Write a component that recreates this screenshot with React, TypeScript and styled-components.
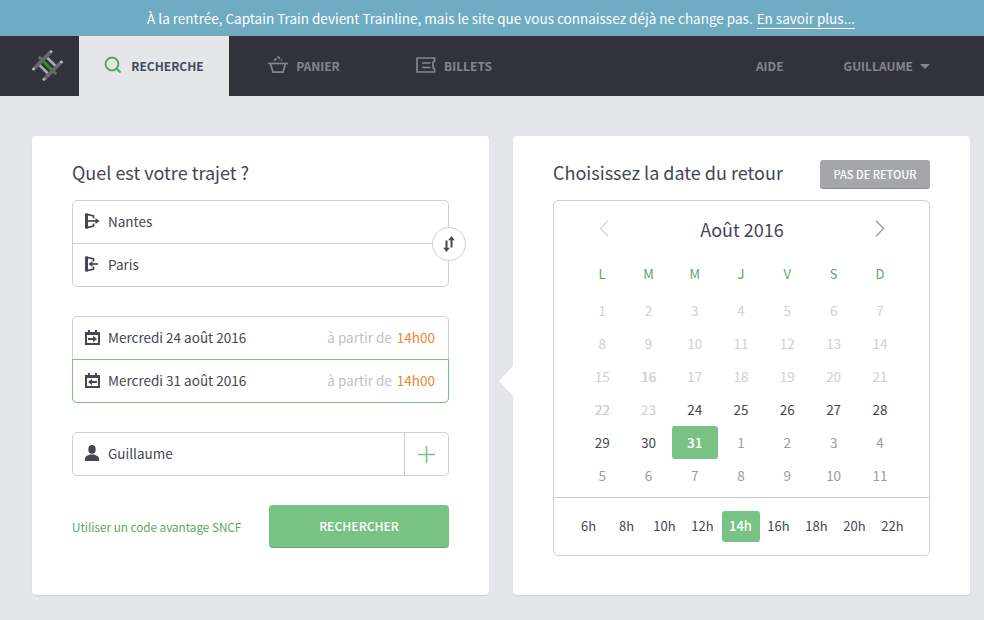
import React from 'react'
import styled, { createGlobalStyle } from 'styled-components'

const FONT = '"Noto Sans CJK SC", "Source Sans Pro", "Open Sans", sans-serif'
const GREEN = '#78c283'
const INK = '#454654'

const Global = createGlobalStyle`
  html, body { margin: 0; padding: 0; }
  body {
    width: 984px;
    height: 620px;
    overflow: hidden;
    background: #e4e6ea;
    font-family: ${FONT};
    color: ${INK};
  }
  * { box-sizing: border-box; }
`

const Banner = styled.div`
  height: 36px;
  background: #6facc3;
  color: #fff;
  font-size: 13.5px;
  line-height: 36px;
  text-align: center;
  padding-left: 18px;
`

const BannerLink = styled.a`
  margin-left: 4px;
  border-bottom: 1px solid #fff;
`

const Nav = styled.nav`
  height: 60px;
  display: flex;
  background: #32323c;
`

const LogoCell = styled.div`
  width: 79px;
  display: flex;
  align-items: center;
  padding: 0 0 1px 32px;
`

const NavItem = styled.div<{ $active?: boolean }>`
  width: 150px;
  display: flex;
  align-items: center;
  justify-content: center;
  gap: ${p => (p.$active ? 9 : 8)}px;
  padding-bottom: 2px;
  font-size: 12px;
  font-weight: 700;
  background: ${p => (p.$active ? '#e4e6ea' : 'transparent')};
  color: ${p => (p.$active ? '#434a60' : '#85858c')};
`

const NavRight = styled.div`
  margin-left: auto;
  display: flex;
  align-items: center;
  padding: 0 54px 2px 0;
  gap: 60px;
  font-size: 12px;
  font-weight: 700;
  color: #85858c;
`

const UserMenu = styled.div`
  display: flex;
  align-items: center;
  gap: 7px;
`

const Caret = styled.span`
  width: 0;
  height: 0;
  margin-top: 3px;
  border-left: 5px solid transparent;
  border-right: 5px solid transparent;
  border-top: 5px solid #85858c;
`

const Main = styled.main`
  display: flex;
  gap: 24px;
  padding: 40px 14px 0 32px;
`

const Card = styled.section`
  position: relative;
  width: 457px;
  height: 459px;
  background: #fff;
  border-radius: 4px;
  box-shadow: 0 1px 1px rgba(50, 50, 60, 0.12);
  padding: 24px 40px 0;
`

const Tail = styled.span`
  position: absolute;
  left: -14px;
  top: 230px;
  width: 0;
  height: 0;
  border-top: 15px solid transparent;
  border-bottom: 15px solid transparent;
  border-right: 14px solid #fff;
`

const Title = styled.h2`
  margin: 0;
  height: 26px;
  font-size: 18px;
  font-weight: 400;
  line-height: 24px;
  color: ${INK};
`

const FieldGroup = styled.div<{ $mt: number }>`
  position: relative;
  margin-top: ${p => p.$mt}px;
  border: 1px solid #cfd0d3;
  border-radius: 5px;
`

const Row = styled.div<{ $selected?: boolean }>`
  height: 42px;
  display: flex;
  align-items: center;
  padding: 0 13px 2px 12px;
  font-size: 13.5px;
  color: ${INK};
  & + & {
    height: 43px;
    border-top: 1px solid #cfd0d3;
  }
  ${p =>
    p.$selected &&
    `
    && {
      height: 44px;
      margin: 0 -1px -1px;
      border: 1px solid ${GREEN};
      border-radius: 0 0 5px 5px;
      padding: 0 13px 2px 12px;
    }
  `}
`

const RowIcon = styled.span`
  width: 23px;
  height: 16px;
  display: flex;
  align-items: center;
  flex: none;
`

const RowHint = styled.span`
  margin-left: auto;
  color: #bfc0c4;
`

const RowTime = styled.span`
  margin-left: 5px;
  color: #ee8430;
`

const SwapButton = styled.button`
  position: absolute;
  right: -18px;
  top: 26px;
  width: 34px;
  height: 34px;
  padding: 0;
  display: flex;
  align-items: center;
  justify-content: center;
  background: #fff;
  border: 1px solid #cfd0d3;
  border-radius: 50%;
`

const TravellerRow = styled.div`
  display: flex;
  height: 42px;
`

const TravellerName = styled.div`
  flex: 1;
  display: flex;
  align-items: center;
  padding: 0 0 2px 12px;
  font-size: 13.5px;
`

const AddButton = styled.div`
  width: 44px;
  display: flex;
  align-items: center;
  justify-content: center;
  border-left: 1px solid #cfd0d3;
`

const Actions = styled.div`
  display: flex;
  align-items: center;
  justify-content: space-between;
  margin-top: 29px;
`

const CodeLink = styled.a`
  color: #5da46a;
  font-size: 11.7px;
`

const SearchButton = styled.div`
  width: 180px;
  height: 43px;
  display: flex;
  align-items: center;
  justify-content: center;
  padding-bottom: 1px;
  background: ${GREEN};
  border-bottom: 1px solid #63a86e;
  border-radius: 4px;
  color: #fff;
  font-size: 12.2px;
  font-weight: 500;
`

const CalendarHead = styled.div`
  display: flex;
  align-items: center;
  justify-content: space-between;
  height: 26px;
`

const NoReturn = styled.div`
  width: 110px;
  height: 29px;
  margin-top: 3px;
  display: flex;
  align-items: center;
  justify-content: center;
  padding-bottom: 1px;
  background: #a5a6aa;
  border-bottom: 1px solid #8f9095;
  border-radius: 3px;
  color: #fff;
  font-size: 11px;
  font-weight: 500;
`

const Calendar = styled.div`
  margin-top: 14px;
  height: 356px;
  border: 1px solid #cfd0d3;
  border-radius: 5px;
`

const MonthBar = styled.div`
  height: 57px;
  padding: 0 44px 2px 45px;
  display: flex;
  align-items: center;
  justify-content: space-between;
  font-size: 18px;
  color: ${INK};
`

const DayGrid = styled.div`
  display: grid;
  grid-template-columns: repeat(7, 46.3px);
  grid-template-rows: 36px;
  grid-auto-rows: 33px;
  padding: 0 0 0 25px;
  height: 239px;
`

const WeekDay = styled.div`
  display: flex;
  align-items: flex-start;
  justify-content: center;
  padding-top: 6px;
  color: #5da46a;
  font-size: 13px;
`

const Day = styled.div<{ $tone: Tone; $blurred?: boolean }>`
  display: flex;
  align-items: center;
  justify-content: center;
  padding-bottom: 1px;
  font-size: 13.5px;
  border-radius: 3px;
  color: ${p =>
    p.$tone === 'past' ? '#cfd0d4' : p.$tone === 'now' ? INK : p.$tone === 'next' ? '#9c9ca2' : '#fff'};
  background: ${p => (p.$tone === 'picked' ? GREEN : 'transparent')};
  font-weight: ${p => (p.$tone === 'picked' ? 500 : 400)};
  text-shadow: ${p => (p.$blurred ? '0.5px 0 currentColor' : 'none')};
`

const Hours = styled.div`
  display: grid;
  grid-template-columns: repeat(9, 38px);
  padding: 13px 0 0 16px;
  height: 58px;
  border-top: 1px solid #cfd0d3;
`

const Hour = styled.div<{ $picked?: boolean }>`
  height: 31px;
  display: flex;
  align-items: center;
  justify-content: center;
  padding: 0 1px 2px 0;
  font-size: 13px;
  border-radius: 3px;
  color: ${p => (p.$picked ? '#fff' : INK)};
  background: ${p => (p.$picked ? GREEN : 'transparent')};
  font-weight: ${p => (p.$picked ? 500 : 400)};
`

const Logo = () => (
  <svg width="31" height="31" viewBox="0 0 34 34">
    <g transform="rotate(45 17 17)">
      <rect x="3.500" y="15.400" width="27" height="3.200" fill="#3e8a33" />
      <rect x="10" y="9.600" width="14" height="3" fill="#a9a9a9" />
      <rect x="10" y="21.400" width="14" height="3" fill="#a9a9a9" />
      <rect x="7" y="5" width="4" height="24" fill="#68686c" />
      <rect x="23" y="5" width="4" height="24" fill="#68686c" />
      <rect x="7.500" y="2" width="3" height="3" fill="#b5b5b5" />
      <rect x="23.500" y="2" width="3" height="3" fill="#b5b5b5" />
      <rect x="7.500" y="29" width="3" height="3" fill="#b5b5b5" />
      <rect x="23.500" y="29" width="3" height="3" fill="#b5b5b5" />
    </g>
  </svg>
)

const SearchIcon = () => (
  <svg width="18" height="18" viewBox="0 0 18 18" fill="none" stroke="#56a865" strokeWidth="2">
    <circle cx="8" cy="8" r="6.400" />
    <path d="M12.500 12.500 16.500 16.500" strokeWidth="2.400" />
  </svg>
)

const BasketIcon = () => (
  <svg width="20" height="18" viewBox="0 0 20 18" fill="none" stroke="#85858c" strokeWidth="1.700">
    <path d="M0 7.500h20" />
    <path d="M2.600 8 5 16.200h10L17.400 8" />
    <path d="M6 4.600 10 1l4 3.600" strokeDasharray="3.400 1.400" />
  </svg>
)

const TicketIcon = () => (
  <svg width="20" height="16" viewBox="0 0 20 16" fill="none" stroke="#85858c" strokeWidth="1.700">
    <path d="M19.500 1H1v14h18.500" />
    <path d="M6 6h8.500M6 10.500h8.500" />
    <path d="M18.500 1v3.500l-1.500 .8v5.400l1.500 .8V15" />
  </svg>
)

const StationIcon = ({ back }: { back?: boolean }) => (
  <svg width="15" height="16" viewBox="0 0 15 16" fill="none" stroke={INK} strokeWidth="1.700">
    <path d="M1.500 .6V15.400" strokeWidth="3" />
    <path d="M1 1.200 8.500 3V5.600" />
    <path d="M1 14.800 8.500 13V10.400" />
    {back ? (
      <>
        <path d="M6 8h7" />
        <path d="M7.500 5 3.500 8l4 3Z" fill={INK} stroke="none" />
      </>
    ) : (
      <>
        <path d="M3 8h8" />
        <path d="M10.500 5 14.500 8l-4 3Z" fill={INK} stroke="none" />
      </>
    )}
  </svg>
)

const DateIcon = ({ back }: { back?: boolean }) => (
  <svg width="15" height="15" viewBox="0 0 15 15" fill={INK}>
    <path d="M3 0h2v2h5V0h2v2h3v13H0V2h3Zm-1 5v8h11V5Z" />
    {back ? (
      <path d="M3 9 7 5.800V8h5v2H7v2.200Z" />
    ) : (
      <path d="M12 9 8 5.800V8H3v2h5v2.200Z" />
    )}
  </svg>
)

const PersonIcon = () => (
  <svg width="14" height="16" viewBox="0 0 14 16" fill={INK}>
    <ellipse cx="7" cy="4.400" rx="3.700" ry="4.400" />
    <path d="M0 16v-2.600C0 11 3 10.400 5 9.400h4c2 1 5 1.600 5 4V16Z" />
  </svg>
)

const PlusIcon = () => (
  <svg width="17" height="17" viewBox="0 0 17 17" stroke={GREEN} strokeWidth="1.600">
    <path d="M8.500 0v17M0 8.500h17" />
  </svg>
)

const SwapIcon = () => (
  <svg width="12" height="16" viewBox="0 0 12 16" fill={INK}>
    <path d="M7.500 3h2v8.500h-2Z" />
    <path d="M2.500 4.500h2V13h-2Z" />
    <path d="M8.500 0 11.800 4.200H5.200Z" />
    <path d="M3.500 16 .2 11.800h6.600Z" />
  </svg>
)

const Chevron = ({ dir, color }: { dir: 'left' | 'right'; color: string }) => (
  <svg width="10" height="17" viewBox="0 0 10 17" fill="none" stroke={color} strokeWidth="1.400">
    <path d={dir === 'left' ? 'M9 .8 1.500 8.500 9 16.200' : 'M1 .8 8.500 8.500 1 16.200'} />
  </svg>
)

type Tone = 'past' | 'now' | 'next' | 'picked'
type Cell = { label: number; tone: Tone }

const weekDays = ['L', 'M', 'M', 'J', 'V', 'S', 'D']
const hours = ['6h', '8h', '10h', '12h', '14h', '16h', '18h', '20h', '22h']

const days: Cell[] = [
  ...Array.from({ length: 23 }, (_, i): Cell => ({ label: i + 1, tone: 'past' })),
  ...Array.from({ length: 7 }, (_, i): Cell => ({ label: i + 24, tone: 'now' })),
  { label: 31, tone: 'picked' },
  ...Array.from({ length: 11 }, (_, i): Cell => ({ label: i + 1, tone: 'next' })),
]

const App = () => {
  return (
    <>
      <Global />
      <Banner>
        À la rentrée, Captain Train devient Trainline, mais le site que vous connaissez déjà ne change pas.
        <BannerLink>En savoir plus...</BannerLink>
      </Banner>
      <Nav>
        <LogoCell>
          <Logo />
        </LogoCell>
        <NavItem $active>
          <SearchIcon />
          RECHERCHE
        </NavItem>
        <NavItem>
          <BasketIcon />
          PANIER
        </NavItem>
        <NavItem>
          <TicketIcon />
          BILLETS
        </NavItem>
        <NavRight>
          <span>AIDE</span>
          <UserMenu>
            GUILLAUME
            <Caret />
          </UserMenu>
        </NavRight>
      </Nav>
      <Main>
        <Card>
          <Title>Quel est votre trajet ?</Title>
          <FieldGroup $mt={14}>
            <Row>
              <RowIcon>
                <StationIcon />
              </RowIcon>
              Nantes
            </Row>
            <Row>
              <RowIcon>
                <StationIcon back />
              </RowIcon>
              Paris
            </Row>
            <SwapButton>
              <SwapIcon />
            </SwapButton>
          </FieldGroup>
          <FieldGroup $mt={29}>
            <Row>
              <RowIcon>
                <DateIcon />
              </RowIcon>
              Mercredi 24 août 2016
              <RowHint>à partir de</RowHint>
              <RowTime>14h00</RowTime>
            </Row>
            <Row $selected>
              <RowIcon>
                <DateIcon back />
              </RowIcon>
              Mercredi 31 août 2016
              <RowHint>à partir de</RowHint>
              <RowTime>14h00</RowTime>
            </Row>
          </FieldGroup>
          <FieldGroup $mt={29}>
            <TravellerRow>
              <TravellerName>
                <RowIcon>
                  <PersonIcon />
                </RowIcon>
                Guillaume
              </TravellerName>
              <AddButton>
                <PlusIcon />
              </AddButton>
            </TravellerRow>
          </FieldGroup>
          <Actions>
            <CodeLink>Utiliser un code avantage SNCF</CodeLink>
            <SearchButton>RECHERCHER</SearchButton>
          </Actions>
        </Card>
        <Card>
          <Tail />
          <CalendarHead>
            <Title>Choisissez la date du retour</Title>
            <NoReturn>PAS DE RETOUR</NoReturn>
          </CalendarHead>
          <Calendar>
            <MonthBar>
              <Chevron dir="left" color="#d8d9dc" />
              Août 2016
              <Chevron dir="right" color="#9c9ca2" />
            </MonthBar>
            <DayGrid>
              {weekDays.map((d, i) => (
                <WeekDay key={i}>{d}</WeekDay>
              ))}
              {days.map((d, i) => (
                <Day key={i} $tone={d.tone} $blurred={d.tone === 'past' && (d.label === 22 || d.label === 16)}>
                  {d.label}
                </Day>
              ))}
            </DayGrid>
            <Hours>
              {hours.map(h => (
                <Hour key={h} $picked={h === '14h'}>
                  {h}
                </Hour>
              ))}
            </Hours>
          </Calendar>
        </Card>
      </Main>
    </>
  )
}

export default App
